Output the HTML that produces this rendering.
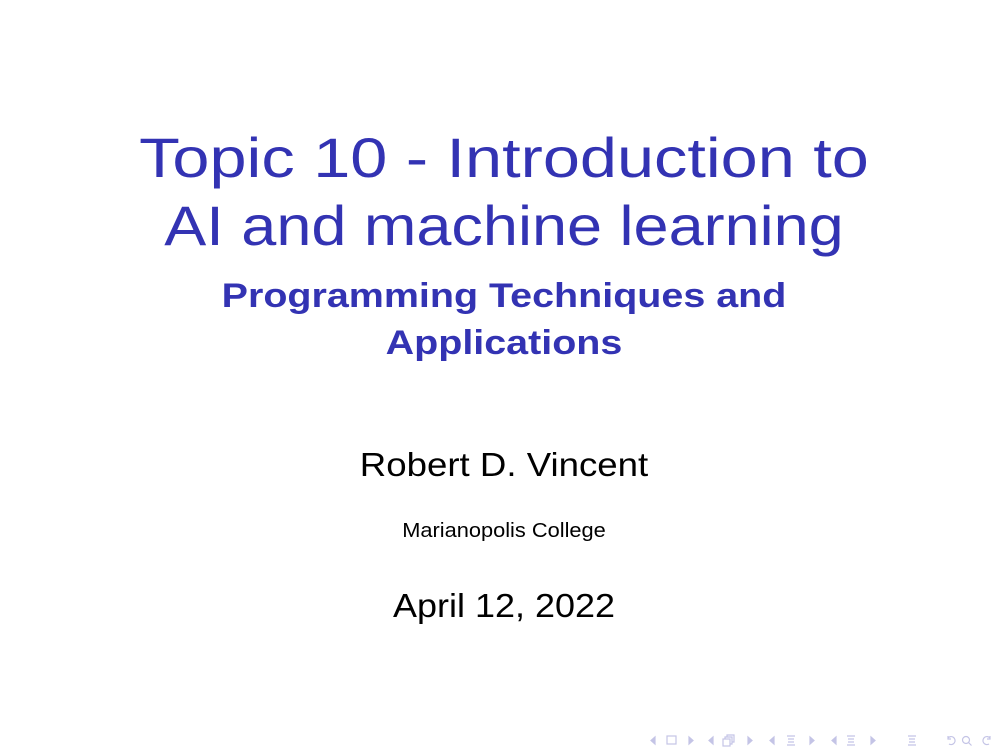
<!DOCTYPE html>
<html><head><meta charset="utf-8"><style>
body{margin:0;width:1008px;height:756px;background:#fff;position:relative;overflow:hidden;font-family:"Liberation Sans","DejaVu Sans",sans-serif}
.t{position:absolute;left:0;width:1008px;text-align:center;white-space:nowrap;transform-origin:504px 50%}
.b{color:#3333b3}
</style></head><body>
<div class="t b" style="top:130px;font-size:56px;line-height:56px;transform:scaleX(1.19)">Topic 10 - Introduction to</div>
<div class="t b" style="top:198px;font-size:56px;line-height:56px;transform:scaleX(1.125)">AI and machine learning</div>
<div class="t b" style="top:279px;font-size:34px;line-height:34px;font-weight:bold;transform:scaleX(1.16)">Programming Techniques and</div>
<div class="t b" style="top:326px;font-size:34px;line-height:34px;font-weight:bold;transform:scaleX(1.16)">Applications</div>
<div class="t" style="top:448px;font-size:33px;line-height:33px;color:#000;transform:scaleX(1.11)">Robert D. Vincent</div>
<div class="t" style="top:521px;font-size:20px;line-height:20px;color:#000;transform:scaleX(1.09)">Marianopolis College</div>
<div class="t" style="top:589px;font-size:33px;line-height:33px;color:#000;transform:scaleX(1.09)">April 12, 2022</div>
<svg style="position:absolute;left:640px;top:725px" width="368" height="31" viewBox="0 0 368 31" fill="none" stroke="#c4c4e6" stroke-width="1.2">
<path d="M15 12l-4 3.5 4 3.5z" fill="#c4c4e6"/>
<rect x="27" y="11" width="9" height="8"/>
<path d="M49 12l4 3.5-4 3.5z" fill="#c4c4e6"/>
<path d="M73 12l-4 3.5 4 3.5z" fill="#c4c4e6"/>
<rect x="83" y="14" width="7" height="7"/><path d="M85 14v-2h7v7h-2M87 12v-2h7v7h-2"/>
<path d="M108 12l4 3.5-4 3.5z" fill="#c4c4e6"/>
<path d="M134 12l-4 3.5 4 3.5z" fill="#c4c4e6"/>
<path d="M147 11h8M148 14h6M148 17h6M147 20h8"/>
<path d="M170 12l4 3.5-4 3.5z" fill="#c4c4e6"/>
<path d="M196 12l-4 3.5 4 3.5z" fill="#c4c4e6"/>
<path d="M207 11h8M208 14h6M208 17h6M207 20h8"/>
<path d="M231 12l4 3.5-4 3.5z" fill="#c4c4e6"/>
<path d="M268 11h8M269 14h6M269 17h6M268 20h8"/>
<path d="M308 13a4 4 0 1 1 1 6M308 11v3h3"/>
<circle cx="326" cy="15" r="3.5"/><path d="M328.5 17.5l3 3"/>
<path d="M350 13a4 4 0 1 0 -1 6M350 11v3h-3"/>
</svg>
</body></html>
